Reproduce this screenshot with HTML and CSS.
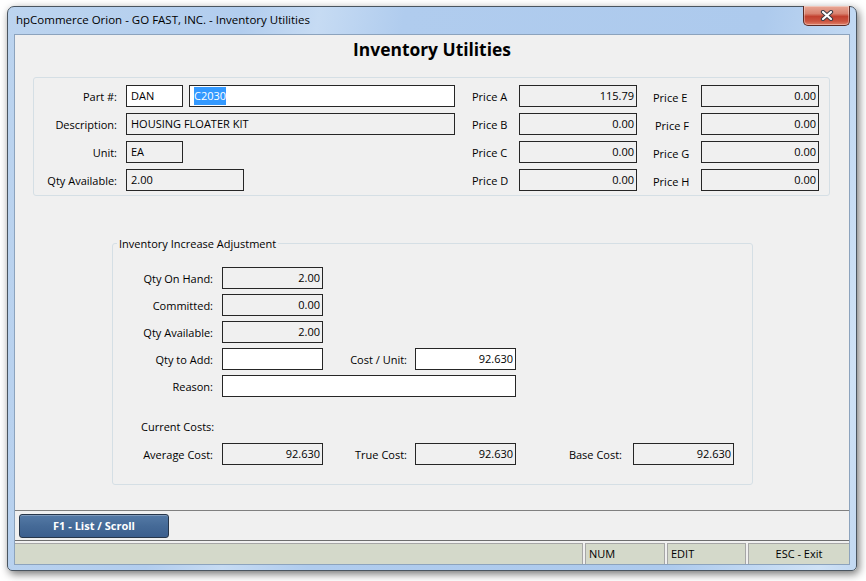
FILE: index.html
```html
<!DOCTYPE html>
<html>
<head>
<meta charset="utf-8">
<link rel="stylesheet" href="styles.css">
</head>
<body>
<div class="window">
  <div class="titlebar">
    <span class="title">hpCommerce Orion - GO FAST, INC. - Inventory Utilities</span>
    <div class="close">
      <svg width="14" height="11" viewBox="0 0 14 11">
        <path d="M3 2 L11 9 M11 2 L3 9" stroke="#3b3b44" stroke-width="4.2" stroke-linecap="round"/>
        <path d="M3 2 L11 9 M11 2 L3 9" stroke="#ffffff" stroke-width="2.2" stroke-linecap="round"/>
      </svg>
    </div>
  </div>
  <div class="client">
    <h1 class="heading">Inventory Utilities</h1>

    <div class="top-group">
      <div class="trow">
        <span class="lbl1">Part #:</span>
        <div class="fieldcol">
          <div class="box white w57">DAN</div>
          <div class="box white w266"><span class="sel">C2030</span></div>
        </div>
        <span class="plbl">Price A</span>
        <div class="box num pbox">115.79</div>
        <span class="plbl2">Price E</span>
        <div class="box num pbox">0.00</div>
      </div>
      <div class="trow">
        <span class="lbl1">Description:</span>
        <div class="fieldcol">
          <div class="box w329">HOUSING FLOATER KIT</div>
        </div>
        <span class="plbl">Price B</span>
        <div class="box num pbox">0.00</div>
        <span class="plbl2 f">Price F</span>
        <div class="box num pbox">0.00</div>
      </div>
      <div class="trow">
        <span class="lbl1">Unit:</span>
        <div class="fieldcol">
          <div class="box w57">EA</div>
        </div>
        <span class="plbl">Price C</span>
        <div class="box num pbox">0.00</div>
        <span class="plbl2">Price G</span>
        <div class="box num pbox">0.00</div>
      </div>
      <div class="trow">
        <span class="lbl1">Qty Available:</span>
        <div class="fieldcol">
          <div class="box w118">2.00</div>
        </div>
        <span class="plbl">Price D</span>
        <div class="box num pbox">0.00</div>
        <span class="plbl2">Price H</span>
        <div class="box num pbox">0.00</div>
      </div>
    </div>

    <fieldset class="adj">
      <legend>Inventory Increase Adjustment</legend>
      <div class="arow">
        <span class="albl">Qty On Hand:</span>
        <div class="box num w100">2.00</div>
      </div>
      <div class="arow">
        <span class="albl">Committed:</span>
        <div class="box num w100">0.00</div>
      </div>
      <div class="arow">
        <span class="albl">Qty Available:</span>
        <div class="box num w100">2.00</div>
      </div>
      <div class="arow">
        <span class="albl">Qty to Add:</span>
        <div class="box white w100"></div>
        <span class="albl2">Cost / Unit:</span>
        <div class="box white num w100">92.630</div>
      </div>
      <div class="arow">
        <span class="albl">Reason:</span>
        <div class="box white w293"></div>
      </div>
      <div class="cc">Current Costs:</div>
      <div class="arow">
        <span class="albl">Average Cost:</span>
        <div class="box num w100">92.630</div>
        <span class="albl2">True Cost:</span>
        <div class="box num w100">92.630</div>
        <span class="albl3">Base Cost:</span>
        <div class="box num w100">92.630</div>
      </div>
    </fieldset>

    <div class="spacer"></div>

    <div class="buttonbar">
      <button class="fbtn">F1 - List / Scroll</button>
    </div>
    <div class="statusbar">
      <div class="panel p1"></div>
      <div class="panel p2">NUM</div>
      <div class="panel p3">EDIT</div>
      <div class="panel p4">ESC - Exit</div>
    </div>
  </div>
</div>
</body>
</html>
```

FILE: styles.css
```css
html, body {
  margin: 0;
  padding: 0;
}
body {
  background: #ffffff;
  width: 866px;
  height: 581px;
  overflow: hidden;
  font-family: "Open Sans", "Liberation Sans", sans-serif;
  font-size: 11px;
  color: #000;
}
.window {
  box-sizing: border-box;
  margin: 6px 0 0 7px;
  width: 850px;
  height: 565px;
  border: 1px solid #4a5560;
  border-radius: 7px 7px 5px 5px;
  padding: 0 6px 5px 6px;
  display: flex;
  flex-direction: column;
  background: linear-gradient(100deg, #bcd4ef 0%, #b2cdee 25%, #c6dbf3 33%, #b0ccee 42%, #adcaed 80%, #cfe2f6 96%, #c2d8f1 100%);
  box-shadow: 2px 3px 8px rgba(0,0,0,0.55);
}
.titlebar {
  height: 27px;
  flex: none;
  display: flex;
  justify-content: space-between;
  align-items: flex-start;
}
.title {
  margin: 5px 0 0 2px;
  font-size: 11.5px;
  line-height: 16px;
  color: #000;
}
.close {
  margin-top: -1px;
  width: 47px;
  height: 20px;
  box-sizing: border-box;
  border: 1px solid #5b2a24;
  border-top: none;
  border-radius: 0 0 5px 5px;
  background: linear-gradient(#e9a896 0%, #d9826f 40%, #c2412f 55%, #cb5440 80%, #e0826a 100%);
  display: flex;
  align-items: center;
  justify-content: center;
  box-shadow: inset 0 0 0 1px rgba(255,255,255,0.35);
}
.client {
  flex: 1;
  display: flex;
  flex-direction: column;
  background: #f0f0f0;
  border: 1px solid #8ca3bd;
}
.heading {
  margin: 0;
  height: 30px;
  line-height: 29px;
  text-align: center;
  font-size: 17.4px;
  font-weight: bold;
  color: #000;
}
.top-group {
  box-sizing: border-box;
  margin: 12px 0 0 18px;
  width: 797px;
  height: 119px;
  border: 1px solid #d5dfe5;
  border-radius: 3px;
  padding-top: 7px;
  display: flex;
  flex-direction: column;
  gap: 6px;
}
.trow {
  display: flex;
  align-items: center;
  height: 22px;
}
.lbl1 {
  width: 83px;
  margin-right: 9px;
  text-align: right;
}
.fieldcol {
  width: 329px;
  display: flex;
  gap: 6px;
}
.plbl {
  width: 47px;
  margin-left: 17px;
}
.plbl2 {
  width: 48px;
  margin-left: 16px;
  padding-top: 2px;
}
.plbl2.f {
  padding-left: 2px;
  width: 46px;
}
.box {
  box-sizing: border-box;
  height: 22px;
  border: 1px solid #262626;
  background: #f0f0f0;
  padding: 0 4px;
  line-height: 19px;
  white-space: nowrap;
  overflow: hidden;
}
.box.white {
  background: #ffffff;
}
.box.num {
  text-align: right;
  padding: 0 2px 0 4px;
}
.pbox { width: 118px; }
.w57 { width: 57px; }
.w266 { width: 266px; }
.w329 { width: 329px; }
.w118 { width: 118px; }
.w100 { width: 101px; }
.w293 { width: 294px; }
.sel {
  background: #3399ff;
  color: #fff;
  padding: 1px 0 2px;
}
.adj {
  box-sizing: border-box;
  margin: 40px 0 0 97px;
  width: 641px;
  height: 249px;
  border: 1px solid #d5dfe5;
  border-radius: 3px;
  padding: 16px 0 0 0;
  min-width: 0;
}
.adj legend {
  margin-left: 4px;
  padding: 0 2px;
  line-height: 15px;
  font-size: 11px;
}
.arow {
  display: flex;
  align-items: center;
  height: 22px;
  margin-bottom: 5px;
}
.albl {
  width: 100px;
  margin-right: 9px;
  text-align: right;
}
.albl2 {
  width: 84px;
  margin-right: 8px;
  text-align: right;
}
.albl3 {
  width: 106px;
  margin-right: 11px;
  text-align: right;
}
.cc {
  margin: 22px 0 0 28px;
  line-height: 15px;
  height: 15px;
  margin-bottom: 9px;
}
.spacer {
  flex: 1;
}
.buttonbar {
  flex: none;
  height: 26px;
  border-top: 1px solid #808080;
  border-bottom: 1px solid #6e6e6e;
  padding: 3px 0 0 4px;
  box-sizing: content-box;
}
.fbtn {
  display: block;
  width: 150px;
  height: 24px;
  margin: 0;
  padding: 0;
  border: 1px solid #27364a;
  border-radius: 3px;
  background: linear-gradient(#557aa6 0%, #456a97 50%, #3c5f8e 100%);
  box-shadow: inset 0 1px 0 rgba(255,255,255,0.25);
  color: #ffffff;
  font-family: "Open Sans", "Liberation Sans", sans-serif;
  font-size: 11px;
  font-weight: bold;
  line-height: 20px;
}
.statusbar {
  flex: none;
  display: flex;
  gap: 2px;
  padding-top: 2px;
  height: 21px;
}
.panel {
  box-sizing: border-box;
  height: 21px;
  background: #d4d9ca;
  border: 1px solid #a6a6a6;
  border-bottom: none;
  line-height: 19px;
  padding-left: 3px;
  color: #000;
}
.p1 { width: 568px; border-left: none; }
.p2 { width: 80px; }
.p3 { width: 79px; }
.p4 { flex: 1; text-align: center; border-right: none; padding-left: 0; }
```
